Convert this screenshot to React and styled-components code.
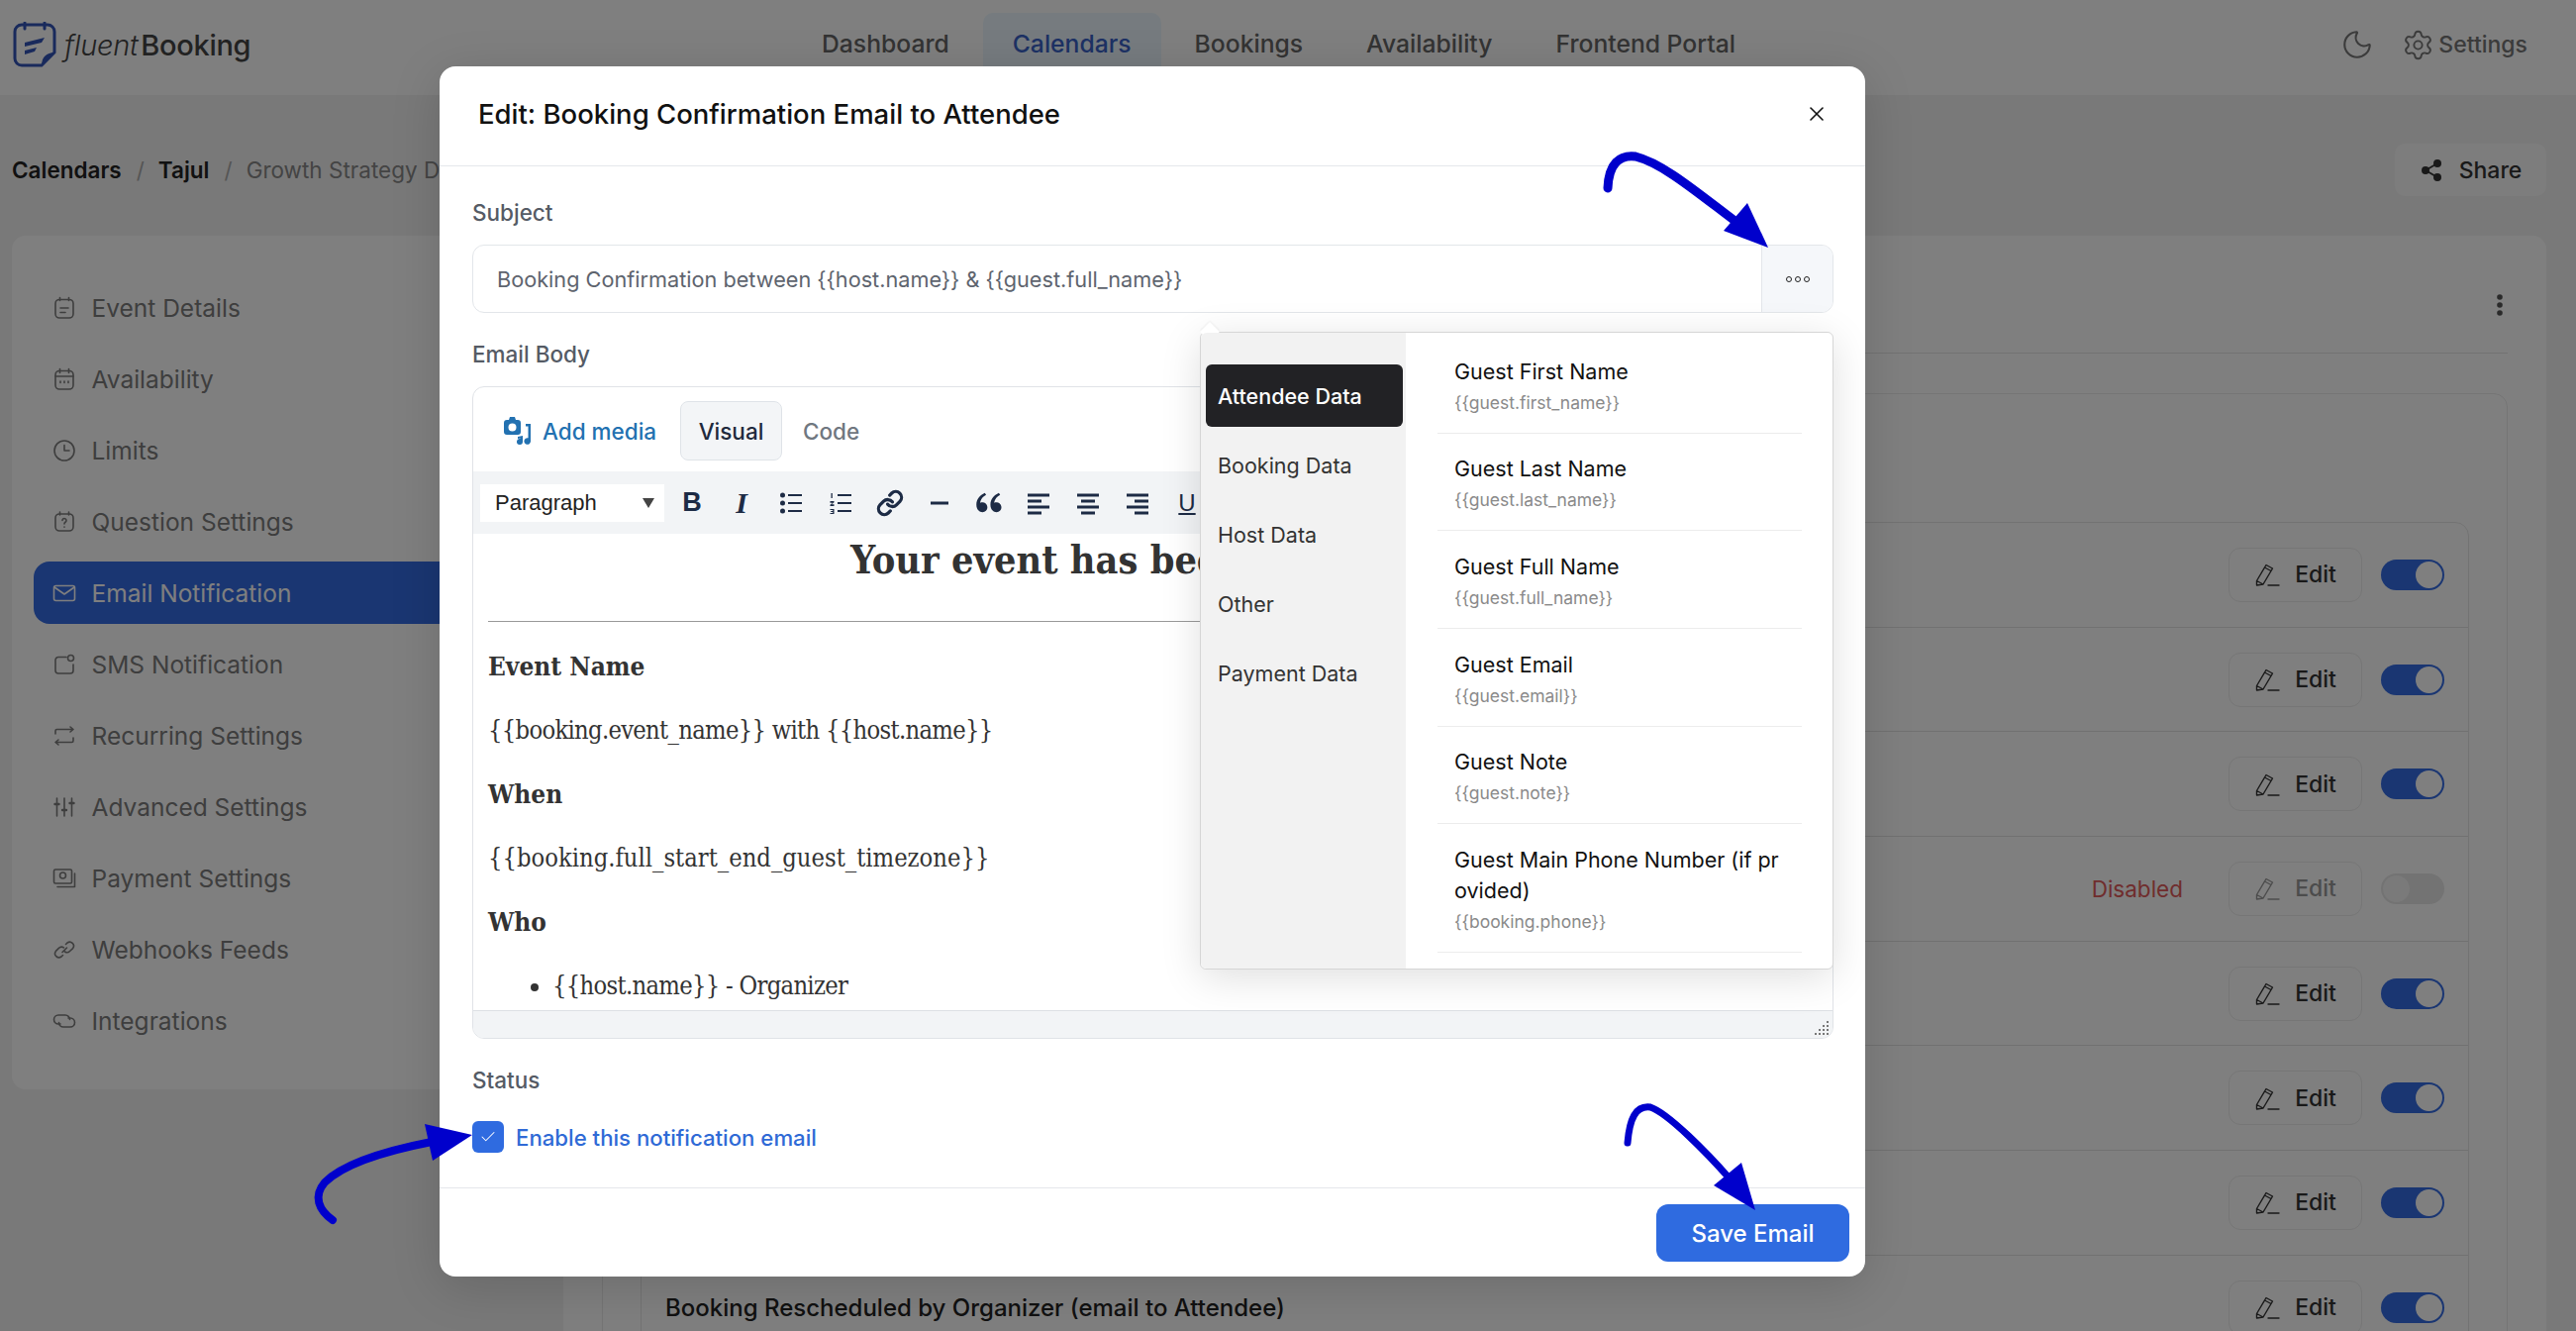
import React from "react";
import styled, { createGlobalStyle } from "styled-components";
import { RiDoubleQuotesL } from "react-icons/ri";
import { Link as LinkIcon, Moon, Settings as Gear, Share2, X, Check } from "lucide-react";

const Global = createGlobalStyle`
  html, body { margin: 0; padding: 0; height: 100%; overflow: hidden; }
  body { font-family: "Inter", "Liberation Sans", sans-serif; background: #f3f3f3; }
  * { box-sizing: border-box; }
`;

const Page = styled.div`
  position: relative;
  width: 2602px;
  height: 1344px;
  overflow: hidden;
`;

const TopBar = styled.header`
  height: 96px;
  background: #fff;
  display: flex;
  align-items: flex-start;
  padding: 0 49px 0 13px;
`;

const Brand = styled.div`
  width: 241px;
  height: 90px;
  display: flex;
  align-items: center;
  gap: 8px;
  font-size: 29px;
  color: #444;
  letter-spacing: -0.3px;
  i { font-weight: 300; margin-right: 3px; }
  b { font-weight: 500; }
`;

const Nav = styled.nav`
  margin-left: 546px;
  display: flex;
  gap: 4px;
  padding-top: 13px;
`;

const NavItem = styled.a`
  height: 66px;
  padding: 0 30px 4px;
  display: flex;
  align-items: center;
  font-size: 24.7px;
  font-weight: 500;
  border-radius: 10px 10px 0 0;
  color: ${(p) => (p.$active ? "#3a63c8" : "#666")};
  background: ${(p) => (p.$active ? "#ecf7ff" : "transparent")};
`;

const TopRight = styled.div`
  margin-left: auto;
  height: 90px;
  display: flex;
  align-items: center;
  color: #777;
  font-size: 23px;
  font-weight: 500;
  svg { display: block; }
`;

const SettingsLink = styled.span`
  display: flex;
  align-items: center;
  gap: 4px;
  margin-left: 28px;
`;

const Content = styled.main`
  padding: 49px 30px 0 12px;
`;

const CrumbRow = styled.div`
  height: 53px;
  margin-bottom: 40px;
  display: flex;
  align-items: center;
  justify-content: space-between;
`;

const Crumbs = styled.div`
  display: flex;
  align-items: center;
  font-size: 22.5px;
  color: #888;
  strong { color: #222; font-weight: 600; }
  em { font-style: normal; color: #aaa; margin: 0 14px 0 15px; }
`;

const ShareButton = styled.button`
  width: 153px;
  height: 53px;
  border: none;
  border-radius: 10px;
  background: #fafafa;
  font: 500 23px "Inter", sans-serif;
  color: #333;
  display: flex;
  align-items: center;
  justify-content: center;
  gap: 16px;
`;

const Columns = styled.div`
  display: flex;
  gap: 24px;
  align-items: flex-start;
`;

const Sidebar = styled.aside`
  width: 533px;
  height: 862px;
  background: #fff;
  border-radius: 14px;
  padding: 41px 0 0 22px;
  display: flex;
  flex-direction: column;
  gap: 9px;
`;

const SideItem = styled.a`
  height: 63px;
  display: flex;
  align-items: center;
  gap: 15.5px;
  padding-left: 19px;
  font-size: 24.5px;
  border-radius: 16px;
  color: ${(p) => (p.$active ? "#fff" : "#7c7c7c")};
  background: ${(p) => (p.$active ? "#356ce4" : "transparent")};
`;

const MainCard = styled.section`
  flex: 1;
  height: 1200px;
  background: #fff;
  border-radius: 14px;
  padding: 0 39px;
`;

const CardHead = styled.div`
  height: 119px;
  border-bottom: 1px solid #e6e6e6;
  display: flex;
  justify-content: flex-end;
  align-items: center;
  padding: 22px 0 0;
  margin-right: 0;
  color: #555;
`;

const InnerBox = styled.div`
  margin-top: 40px;
  border: 1px solid #eaeaea;
  border-radius: 14px;
  padding: 129px 38px 0;
  height: 1100px;
`;

const NotifList = styled.div`
  border: 1px solid #e6e6e6;
  border-radius: 14px;
`;

const NotifRow = styled.div`
  height: 105.7px;
  padding: 0 24px;
  display: flex;
  align-items: center;
  border-bottom: 1px solid #e2e2e2;
`;

const NotifTitle = styled.div`
  font-size: 24px;
  font-weight: 500;
  color: #222;
  margin-right: auto;
`;

const DisabledTag = styled.span`
  font-size: 22.5px;
  color: #e05a5a;
  margin-right: 46px;
`;

const EditButton = styled.button`
  width: 135px;
  height: 55px;
  border: 1px solid #ececec;
  border-radius: 12px;
  background: #fff;
  font: 500 23px "Inter", sans-serif;
  color: ${(p) => (p.$off ? "#999" : "#333")};
  display: flex;
  align-items: center;
  justify-content: center;
  gap: 15px;
`;

const Toggle = styled.span`
  width: 64px;
  height: 31px;
  margin-left: 19px;
  border-radius: 16px;
  padding: 2px;
  display: flex;
  justify-content: ${(p) => (p.$off ? "flex-start" : "flex-end")};
  background: ${(p) => (p.$off ? "#e6e6e6" : "#356ce4")};
  &::after {
    content: "";
    width: 27px;
    height: 27px;
    border-radius: 50%;
    background: ${(p) => (p.$off ? "#f4f4f4" : "#fff")};
  }
`;

const Overlay = styled.div`
  position: absolute;
  inset: 0;
  background: rgba(0, 0, 0, 0.5);
  padding: 67px 718px 0 444px;
`;

const Modal = styled.div`
  width: 1440px;
  height: 1222px;
  background: #fff;
  border-radius: 16px;
  box-shadow: 0 10px 50px rgba(0, 0, 0, 0.15);
  display: flex;
  flex-direction: column;
`;

const ModalHead = styled.div`
  height: 101px;
  flex: none;
  border-bottom: 1px solid #e5e7eb;
  display: flex;
  align-items: center;
  justify-content: space-between;
  padding: 0 37px 5px 39px;
  h2 {
    margin: 0;
    font-size: 27.5px;
    font-weight: 500;
    color: #111;
  }
  svg { display: block; color: #111; }
`;

const ModalBody = styled.div`
  position: relative;
  flex: 1;
  padding: 32px 32px 0 33px;
`;

const FieldLabel = styled.div`
  height: 30px;
  line-height: 30px;
  font-size: 22.5px;
  font-weight: 500;
  color: #555b65;
  margin-bottom: ${(p) => p.$gap || 17}px;
`;

const SubjectRow = styled.div`
  height: 69px;
  margin-bottom: 27px;
  border: 1px solid #e3e6ea;
  border-radius: 12px;
  display: flex;
  align-items: center;
  overflow: hidden;
`;

const SubjectText = styled.div`
  flex: 1;
  padding-left: 24px;
  font-size: 21.7px;
  color: #5e646e;
`;

const DotsButton = styled.div`
  width: 72px;
  height: 100%;
  background: #f5f7fa;
  border-left: 1px solid #e3e6ea;
  display: flex;
  align-items: center;
  justify-content: center;
  gap: 3px;
  span {
    width: 6px;
    height: 6px;
    border-radius: 50%;
    border: 1.6px solid #222;
  }
`;

const Editor = styled.div`
  height: 659px;
  margin-bottom: 27px;
  border: 1px solid #e0e3e7;
  border-radius: 12px;
  overflow: hidden;
  display: flex;
  flex-direction: column;
`;

const MediaRow = styled.div`
  height: 85px;
  flex: none;
  padding: 14px 0 11px 31px;
  display: flex;
  align-items: center;
  font-size: 22.5px;
`;

const AddMedia = styled.a`
  display: flex;
  align-items: center;
  gap: 11px;
  width: 178px;
  font-weight: 500;
  color: #2271b1;
`;

const EditorTab = styled.div`
  width: 103px;
  height: 60px;
  display: flex;
  align-items: center;
  justify-content: center;
  margin-right: -2px;
  font-weight: 500;
  border-radius: 8px;
  border: 1px solid ${(p) => (p.$active ? "#dfe3e8" : "transparent")};
  background: ${(p) => (p.$active ? "#f3f5f7" : "transparent")};
  color: ${(p) => (p.$active ? "#1f2a3d" : "#707780")};
`;

const Toolbar = styled.div`
  height: 63px;
  flex: none;
  background: #f2f4f6;
  padding-left: 7px;
  display: flex;
  align-items: center;
`;

const FormatSelect = styled.div`
  width: 186px;
  height: 38px;
  margin-right: 3px;
  padding: 0 10px 0 15px;
  background: #fff;
  display: flex;
  align-items: center;
  justify-content: space-between;
  font: 22px "Liberation Sans", Arial, sans-serif;
  color: #222;
  &::after {
    content: "";
    border-left: 6px solid transparent;
    border-right: 6px solid transparent;
    border-top: 10px solid #444;
  }
`;

const ToolIcon = styled.span`
  width: 50px;
  height: 38px;
  flex: none;
  display: flex;
  align-items: center;
  justify-content: center;
  color: #1d2b45;
  font: ${(p) => (p.$italic ? "italic 700 30px \"Liberation Serif\", serif" : p.$under ? "400 24px \"Liberation Sans\", sans-serif" : "700 27px \"Liberation Sans\", sans-serif")};
  text-decoration: ${(p) => (p.$under ? "underline" : "none")};
`;

const Document = styled.div`
  flex: 1;
  overflow: hidden;
  padding: 0 15px;
  font-family: "DejaVu Serif", Georgia, serif;
  font-stretch: condensed;
  font-size: 25.3px;
  color: #333;
  h1 {
    margin: 0 0 36px;
    font-size: 39.3px;
    line-height: 52px;
    text-align: center;
    white-space: nowrap;
  }
  hr {
    margin: 0 0 25px;
    border: none;
    border-top: 1.5px solid #999;
  }
  p {
    margin: 0 0 24px;
    line-height: 40px;
  }
  b {
    font-size: 26px;
  }
  ul {
    margin: 0;
    padding-left: 65px;
    line-height: 40px;
  }
`;

const Tight = styled.span`
  letter-spacing: -0.7px;
`;

const StatusBar = styled.div`
  height: 28px;
  flex: none;
  background: #f2f4f6;
  border-top: 1px solid #dde0e4;
  display: flex;
  justify-content: flex-end;
  align-items: flex-end;
  padding: 0 3px 2px 0;
  color: #777;
`;

const CheckRow = styled.label`
  display: flex;
  align-items: center;
  gap: 12px;
  margin-top: -1px;
  font-size: 22.2px;
  font-weight: 500;
  color: #2f6ad6;
`;

const CheckBox = styled.span`
  width: 32px;
  height: 32px;
  border-radius: 6px;
  background: #2f6be0;
  display: flex;
  align-items: center;
  justify-content: center;
  color: #fff;
`;

const Popover = styled.div`
  position: absolute;
  left: 768px;
  top: 167px;
  width: 640px;
  height: 644px;
  background: #fff;
  border: 1px solid #d6d6d6;
  border-radius: 6px;
  box-shadow: 0 8px 40px rgba(0, 0, 0, 0.13);
  display: flex;
  &::before {
    content: "";
    position: absolute;
    left: 2px;
    top: -8px;
    width: 14px;
    height: 14px;
    background: #fff;
    transform: rotate(45deg);
    box-shadow: -1px -1px 2px rgba(0, 0, 0, 0.05);
  }
`;

const GroupColumn = styled.div`
  width: 207px;
  flex: none;
  background: #f2f2f2;
  padding: 32px 3px 0 5px;
  display: flex;
  flex-direction: column;
  gap: 7px;
  border-radius: 6px 0 0 6px;
  position: relative;
`;

const GroupItem = styled.div`
  height: 63px;
  padding-left: 12px;
  display: flex;
  align-items: center;
  border-radius: 6px;
  font-size: 21.5px;
  font-weight: ${(p) => (p.$active ? 500 : 400)};
  color: ${(p) => (p.$active ? "#fff" : "#333")};
  background: ${(p) => (p.$active ? "#222225" : "transparent")};
`;

const TokenList = styled.div`
  width: 368px;
  margin-left: 32px;
  padding-top: 3px;
`;

const TokenRow = styled.div`
  padding: 20.5px 17px 17.2px;
  border-bottom: 1px solid #ececec;
`;

const TokenTitle = styled.div`
  font-size: 21.5px;
  line-height: 31px;
  color: #111;
  word-break: break-all;
`;

const TokenCode = styled.div`
  margin-top: 3px;
  font-size: 17.5px;
  line-height: 26px;
  color: #8a8a8a;
`;

const ModalFoot = styled.div`
  height: 90px;
  flex: none;
  border-top: 1px solid #e5e7eb;
  padding: 16px 16px 0 0;
  display: flex;
  justify-content: flex-end;
`;

const SaveButton = styled.button`
  width: 195px;
  height: 58px;
  border: none;
  border-radius: 12px;
  background: #2f6be0;
  color: #fff;
  font: 500 24px "Inter", sans-serif;
`;

const Arrows = styled.svg`
  position: absolute;
  left: 0;
  top: 0;
  pointer-events: none;
`;

const line = { fill: "none", stroke: "currentColor", strokeWidth: 1.6, strokeLinecap: "round", strokeLinejoin: "round" };

const SideIcon = ({ children }) => (
  <svg width="24" height="24" viewBox="0 0 24 24" {...line} style={{ flex: "none" }}>
    {children}
  </svg>
);

const sideItems = [
  ["Event Details", <><rect x="3" y="3.5" width="18" height="18.5" rx="4" /><path d="M7.5 1.5v3M16.5 1.5v3M8 12h8M8 16.5h5" /></>],
  ["Availability", <><rect x="3" y="3.5" width="18" height="18.5" rx="4" /><path d="M7.5 1.5v4M16.5 1.5v4M3 9h18M8 14v1.5M12 14v1.5M16 14v1.5" /></>],
  ["Limits", <><circle cx="12" cy="12" r="10" /><path d="M12 6.5V12h5" /></>],
  ["Question Settings", <><rect x="3" y="4" width="18" height="17" rx="4" /><path d="M7.5 2v3M16.5 2v3M10 10.5a2 2 0 1 1 3 1.8c-.7.4-1 .8-1 1.6M12 17v.2" /></>],
  ["Email Notification", <><rect x="1.5" y="4.5" width="21" height="15" rx="2" /><path d="M2 6l10 7 10-7" /></>],
  ["SMS Notification", <><path d="M14 4.5H6a3 3 0 0 0-3 3V18a3 3 0 0 0 3 3h12a3 3 0 0 0 3-3v-6" /><circle cx="18.5" cy="5.5" r="3" /></>],
  ["Recurring Settings", <><path d="M3 10V7a1.5 1.5 0 0 1 1.5-1.5H21M18 3l3 2.5L18 8M21 14v3a1.5 1.5 0 0 1-1.5 1.5H3M6 16l-3 2.5L6 21" /></>],
  ["Advanced Settings", <><path d="M4.5 3v18M12 3v18M19.5 3v18" /><path d="M2.5 9h4M10 15h4M17.5 8h4" strokeWidth="2.4" /></>],
  ["Payment Settings", <><rect x="1.5" y="3" width="18" height="14" rx="1.5" /><circle cx="10.5" cy="9" r="3" /><path d="M22.5 7v13.5H5" /></>],
  ["Webhooks Feeds", <><path d="M10 14.5l4.5-4.5M13.5 6.5l1.5-1.5a4 4 0 0 1 5.6 5.6L17.5 13.5a4 4 0 0 1-5 .5M10.5 17.5L9 19a4 4 0 0 1-5.6-5.6l3-3a4 4 0 0 1 5-.5" /></>],
  ["Integrations", <><path d="M8 15H6a4.5 4.5 0 0 1 0-9h7a4.5 4.5 0 0 1 4.5 4.5" /><path d="M16 9h2a4.5 4.5 0 0 1 0 9h-7a4.5 4.5 0 0 1-4.5-4.5" /></>],
];

const PencilMark = () => (
  <svg width="26" height="26" viewBox="0 0 26 26" {...line} strokeWidth="1.4">
    <path d="M2.5 19.5L12 3.5l6.5 3.5L9 23l-6.5 1zM10.5 6l6.5 3.5M2.5 19.5L9 23M14 24h11" />
  </svg>
);

const notifications = [
  ["Booking Confirmation Email to Attendee"],
  ["Booking Confirmation Email to Organizer"],
  ["Booking Reminder Email to Attendee"],
  ["Booking Reminder Email to Organizer", true],
  ["Booking Cancelled by Organizer (email to Attendee)"],
  ["Booking Cancelled by Attendee (email to Organizer)"],
  ["Booking Rescheduled by Attendee (email to Organizer)"],
  ["Booking Rescheduled by Organizer (email to Attendee)"],
];

const groups = ["Attendee Data", "Booking Data", "Host Data", "Other", "Payment Data"];

const tokens = [
  ["Guest First Name", "{{guest.first_name}}"],
  ["Guest Last Name", "{{guest.last_name}}"],
  ["Guest Full Name", "{{guest.full_name}}"],
  ["Guest Email", "{{guest.email}}"],
  ["Guest Note", "{{guest.note}}"],
  ["Guest Main Phone Number (if provided)", "{{booking.phone}}"],
];

const Lines = ({ rows }) => (
  <svg width="24" height="24" viewBox="0 0 24 24" fill="none" stroke="currentColor" strokeWidth="3">
    {rows.map((d) => (
      <path key={d} d={d} />
    ))}
  </svg>
);

const ListMark = ({ numbered }) => (
  <svg width="24" height="24" viewBox="0 0 24 24" fill="currentColor" stroke="none">
    {numbered ? (
      <>
        <rect x="9" y="3" width="14" height="2" />
        <rect x="9" y="11" width="14" height="2" />
        <rect x="9" y="19" width="14" height="2" />
        <path d="M2.5 2h1.3v5H2.5zM1.5 10h4v1.2l-2.5 2h2.5V15h-4v-1.2l2.5-2h-2.5zM1.5 18h4v5h-4v-1h2.7v-1H2.2v-1h2v-1H1.500z" />
      </>
    ) : (
      <>
        <circle cx="3.5" cy="4" r="2.5" />
        <circle cx="3.5" cy="12" r="2.5" />
        <circle cx="3.5" cy="20" r="2.5" />
        <rect x="9" y="3" width="14" height="2" />
        <rect x="9" y="11" width="14" height="2" />
        <rect x="9" y="19" width="14" height="2" />
      </>
    )}
  </svg>
);

const MediaMark = () => (
  <svg width="28" height="28" viewBox="0 0 28 28" fill="#2271b1">
    <path fillRule="evenodd" d="M5 3h2l1-3h5l1 3h2a3 3 0 0 1 3 3v9a3 3 0 0 1-3 3H5a3 3 0 0 1-3-3V6a3 3 0 0 1 3-3zm5.5 3.5a4 4 0 1 0 0 8 4 4 0 0 0 0-8z" transform="translate(-2 0)" />
    <path d="M20 7h7v17.500a3.300 3.300 0 1 1-2.500-3.200V9.500H22V7zM14 20l5-1v6a3 3 0 1 1-2.500-3v-.5l-2.500.5z" />
  </svg>
);

export default function App() {
  return (
    <Page>
      <Global />
      <TopBar>
        <Brand>
          <svg width="44" height="46" viewBox="0 0 44 46" fill="none" style={{ flex: "none" }}>
            <path d="M29 44H9a7 7 0 0 1-7-7V10a7 7 0 0 1 7-7h26a7 7 0 0 1 7 7v21z" stroke="#3355b8" strokeWidth="3" />
            <path d="M12 1v6M32 1v6" stroke="#3355b8" strokeWidth="3" strokeLinecap="round" />
            <path d="M29 44c0-8 5-13 13-13z" fill="#3355b8" />
            <path d="M12 21l20-5-3 5-17 4zM12 29l12-3-2 4-10 3z" fill="#3355b8" />
          </svg>
          <span>
            <i>fluent</i>
            <b>Booking</b>
          </span>
        </Brand>
        <Nav>
          <NavItem>Dashboard</NavItem>
          <NavItem $active>Calendars</NavItem>
          <NavItem>Bookings</NavItem>
          <NavItem>Availability</NavItem>
          <NavItem>Frontend Portal</NavItem>
        </Nav>
        <TopRight>
          <Moon size={34} strokeWidth={1.5} />
          <SettingsLink>
            <Gear size={33} strokeWidth={1.4} />
            Settings
          </SettingsLink>
        </TopRight>
      </TopBar>

      <Content>
        <CrumbRow>
          <Crumbs>
            <strong>Calendars</strong>
            <em>/</em>
            <strong>Tajul</strong>
            <em>/</em>
            Growth Strategy Discussion
          </Crumbs>
          <ShareButton>
            <Share2 size={24} fill="currentColor" />
            Share
          </ShareButton>
        </CrumbRow>
        <Columns>
          <Sidebar>
            {sideItems.map(([label, icon]) => (
              <SideItem key={label} $active={label === "Email Notification"}>
                <SideIcon>{icon}</SideIcon>
                {label}
              </SideItem>
            ))}
          </Sidebar>
          <MainCard>
            <CardHead>
              <svg width="8" height="24" viewBox="0 0 8 24" fill="currentColor" style={{ marginRight: 4 }}>
                <circle cx="4" cy="4" r="2.8" />
                <circle cx="4" cy="12" r="2.8" />
                <circle cx="4" cy="20" r="2.8" />
              </svg>
            </CardHead>
            <InnerBox>
              <NotifList>
                {notifications.map(([title, off]) => (
                  <NotifRow key={title}>
                    <NotifTitle>{title}</NotifTitle>
                    {off && <DisabledTag>Disabled</DisabledTag>}
                    <EditButton $off={off}>
                      <PencilMark />
                      Edit
                    </EditButton>
                    <Toggle $off={off} />
                  </NotifRow>
                ))}
              </NotifList>
            </InnerBox>
          </MainCard>
        </Columns>
      </Content>

      <Overlay>
        <Modal>
          <ModalHead>
            <h2>Edit: Booking Confirmation Email to Attendee</h2>
            <X size={24} strokeWidth={1.6} />
          </ModalHead>
          <ModalBody>
            <FieldLabel>Subject</FieldLabel>
            <SubjectRow>
              <SubjectText>{"Booking Confirmation between {{host.name}} & {{guest.full_name}}"}</SubjectText>
              <DotsButton>
                <span />
                <span />
                <span />
              </DotsButton>
            </SubjectRow>
            <FieldLabel>Email Body</FieldLabel>
            <Editor>
              <MediaRow>
                <AddMedia>
                  <MediaMark />
                  Add media
                </AddMedia>
                <EditorTab $active>Visual</EditorTab>
                <EditorTab>Code</EditorTab>
              </MediaRow>
              <Toolbar>
                <FormatSelect>Paragraph</FormatSelect>
                <ToolIcon>B</ToolIcon>
                <ToolIcon $italic>I</ToolIcon>
                <ToolIcon><ListMark /></ToolIcon>
                <ToolIcon><ListMark numbered /></ToolIcon>
                <ToolIcon><LinkIcon size={28} strokeWidth={2.8} /></ToolIcon>
                <ToolIcon><Lines rows={["M3 12h18"]} /></ToolIcon>
                <ToolIcon><RiDoubleQuotesL size={34} /></ToolIcon>
                <ToolIcon><Lines rows={["M1 4h22M1 10h14M1 16h22M1 22h14"]} /></ToolIcon>
                <ToolIcon><Lines rows={["M1 4h22M5 10h14M1 16h22M5 22h14"]} /></ToolIcon>
                <ToolIcon><Lines rows={["M1 4h22M9 10h14M1 16h22M9 22h14"]} /></ToolIcon>
                <ToolIcon $under>U</ToolIcon>
              </Toolbar>
              <Document>
                <h1>Your event has been scheduled</h1>
                <hr />
                <p><b>Event Name</b></p>
                <p><Tight>{"{{booking.event_name}} with {{host.name}}"}</Tight></p>
                <p><b>When</b></p>
                <p>{"{{booking.full_start_end_guest_timezone}}"}</p>
                <p><b>Who</b></p>
                <ul>
                  <li><Tight>{"{{host.name}} - Organizer"}</Tight></li>
                </ul>
              </Document>
              <StatusBar>
                <svg width="16" height="16" viewBox="0 0 16 16" fill="currentColor">
                  <path d="M13 1h2v2h-2zM9 5h2v2H9zM13 5h2v2h-2zM5 9h2v2H5zM9 9h2v2H9zM13 9h2v2h-2zM1 13h2v2H1zM5 13h2v2H5zM9 13h2v2H9zM13 13h2v2h-2z" />
                </svg>
              </StatusBar>
            </Editor>
            <FieldLabel $gap={27}>Status</FieldLabel>
            <CheckRow>
              <CheckBox>
                <Check size={18} strokeWidth={1.4} />
              </CheckBox>
              Enable this notification email
            </CheckRow>
            <Popover>
              <GroupColumn>
                {groups.map((g, i) => (
                  <GroupItem key={g} $active={i === 0}>{g}</GroupItem>
                ))}
              </GroupColumn>
              <TokenList>
                {tokens.map(([title, code]) => (
                  <TokenRow key={code}>
                    <TokenTitle>{title}</TokenTitle>
                    <TokenCode>{code}</TokenCode>
                  </TokenRow>
                ))}
              </TokenList>
            </Popover>
          </ModalBody>
          <ModalFoot>
            <SaveButton>Save Email</SaveButton>
          </ModalFoot>
        </Modal>
      </Overlay>

      <Arrows width="2602" height="1344" viewBox="0 0 2602 1344">
        <g fill="none" stroke="#0000cc" strokeLinecap="round">
          <path d="M1624 190C1625 165 1636 156 1652 158C1680 165 1715 195 1755 225" strokeWidth="9" />
          <path d="M1644 1154C1646 1130 1652 1116 1667 1118C1685 1124 1725 1165 1747 1190" strokeWidth="7" />
          <path d="M336 1232C322 1222 316 1208 328 1194C350 1172 400 1160 436 1153" strokeWidth="8" />
        </g>
        <g fill="#0000cc">
          <path d="M1786 250L1765 205L1741 233z" />
          <path d="M1773 1222L1759 1174L1731 1197z" />
          <path d="M477 1146L429 1135L437 1172z" />
        </g>
      </Arrows>
    </Page>
  );
}
